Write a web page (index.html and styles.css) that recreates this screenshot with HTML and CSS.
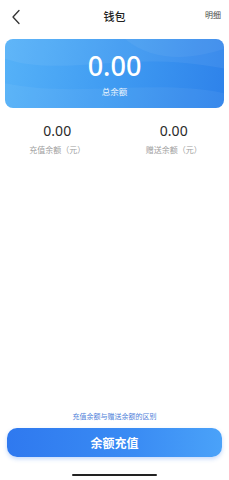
FILE: index.html
```html
<!DOCTYPE html>
<html lang="zh">
<head>
<meta charset="utf-8">
<link rel="stylesheet" href="styles.css">
</head>
<body>
<div class="page">
  <header class="nav">
    <svg class="back" width="10" height="16" viewBox="0 0 10 16"><path d="M8 1.5 L2 8 L8 14.5" fill="none" stroke="#333" stroke-width="1.3" stroke-linecap="round" stroke-linejoin="round"/></svg>
    <div class="title">钱包</div>
    <div class="detail">明细</div>
  </header>
  <section class="card">
    <svg class="waves" viewBox="0 0 219 70" preserveAspectRatio="none">
      <path d="M0 20 C60 40 120 10 219 30 L219 0 L0 0 Z" fill="rgba(255,255,255,0.06)"/>
      <path d="M0 45 C70 60 150 40 219 55 L219 70 L0 70 Z" fill="rgba(255,255,255,0.05)"/>
      <path d="M120 0 C150 25 190 20 219 10 L219 0 Z" fill="rgba(255,255,255,0.05)"/>
    </svg>
    <div class="total">0.00</div>
    <div class="total-label">总余额</div>
  </section>
  <section class="split">
    <div class="col">
      <div class="amt">0.00</div>
      <div class="lbl">充值余额（元）</div>
    </div>
    <div class="col">
      <div class="amt">0.00</div>
      <div class="lbl">赠送余额（元）</div>
    </div>
  </section>
  <div class="spacer"></div>
  <div class="hint">充值余额与赠送余额的区别</div>
  <button class="btn">余额充值</button>
  <div class="home"></div>
</div>
</body>
</html>
```

FILE: styles.css
```css
* { box-sizing: border-box; }
html, body { margin: 0; padding: 0; background: #fff; }
body { font-family: "Noto Sans CJK SC", "Noto Sans", sans-serif; }
.page { width: 229px; height: 480px; display: flex; flex-direction: column; position: relative; }
.nav { height: 39px; position: relative; display: flex; align-items: center; justify-content: center; }
.back { position: absolute; left: 11px; top: 9px; }
.title { font-size: 11px; font-weight: 500; color: #222; margin-top: -8px; }
.detail { position: absolute; right: 8px; top: 9px; font-size: 8px; color: #444; }
.card {
  margin: 0 5px; height: 69px; border-radius: 8px; position: relative; overflow: hidden;
  background: linear-gradient(100deg, #56b2f8 0%, #3f9bf2 50%, #2e82ea 100%);
  display: flex; flex-direction: column; align-items: center; color: #fff;
}
.waves { position: absolute; inset: 0; width: 100%; height: 100%; }
.total { font-family: "Noto Sans", sans-serif; font-size: 27px; font-weight: 500; line-height: 30px; margin-top: 12px; position: relative; }
.total-label { font-size: 8.5px; line-height: 11px; margin-top: 5px; opacity: 0.9; position: relative; }
.split { display: flex; margin-top: 14px; }
.col { flex: 1; display: flex; flex-direction: column; align-items: center; }
.col:first-child { padding-left: 2px; }
.col:last-child { padding-left: 6px; }
.amt { font-family: "Noto Sans", sans-serif; font-size: 14px; line-height: 17px; color: #2a2a2a; }
.lbl { font-size: 8px; line-height: 11px; color: #a0a0a0; margin-top: 5px; }
.spacer { flex: 1; }
.hint { text-align: center; font-size: 7px; line-height: 9px; color: #4f7fd9; margin-bottom: 7px; }
.btn {
  margin: 0 7px; height: 29px; border: none; border-radius: 10px; color: #fff;
  font-family: "Noto Sans CJK SC", sans-serif; font-size: 12px; font-weight: 700;
  background: linear-gradient(90deg, #2f79ef 0%, #3a8cf4 60%, #4aa2f9 100%);
  box-shadow: 0 2px 4px rgba(60,130,240,0.3);
}
.home { width: 85px; height: 2px; background: #222; border-radius: 1px; margin: 17px auto 4px; }
```
